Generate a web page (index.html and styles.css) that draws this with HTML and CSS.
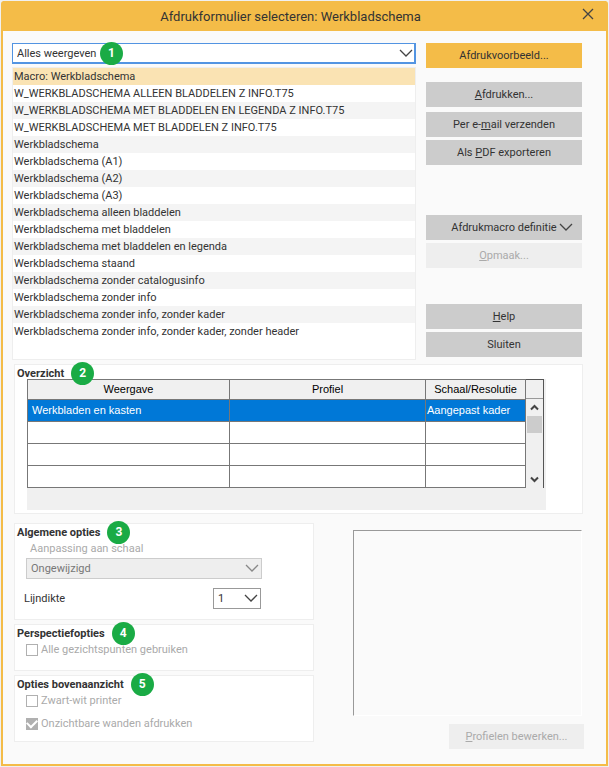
FILE: index.html
```html
<!DOCTYPE html>
<html lang="nl">
    <head>
        <meta charset="UTF-8" />
        <meta name="viewport" content="width=device-width, initial-scale=1.0" />
        <title>Afdrukformulier selecteren: Werkbladschema</title>
        <link rel="stylesheet" href="styles.css">
    </head>
    <body>
        <div class="window">
            <header class="titlebar">
                <h1>Afdrukformulier selecteren: Werkbladschema</h1>
                <button class="close-btn" aria-label="Sluit venster">
                    <svg width="12" height="12" viewBox="0 0 12 12"><path d="M1 1L11 11M11 1L1 11" /></svg>
                </button>
            </header>

            <main class="content">
                <section class="top">
                    <div class="forms">
                        <div class="combo combo-active">
                            <select aria-label="Weergave filter">
                                <option>Alles weergeven</option>
                            </select>
                            <svg class="chevron" width="14" height="8" viewBox="0 0 14 8"><path d="M1 1L7 7L13 1" /></svg>
                            <span class="badge">1</span>
                        </div>
                        <ul class="form-list" role="listbox" aria-label="Formulieren">
                            <li class="selected" role="option" aria-selected="true">Macro: Werkbladschema</li>
                            <li role="option">W_WERKBLADSCHEMA ALLEEN BLADDELEN Z INFO.T75</li>
                            <li role="option">W_WERKBLADSCHEMA MET BLADDELEN EN LEGENDA Z INFO.T75</li>
                            <li role="option">W_WERKBLADSCHEMA MET BLADDELEN Z INFO.T75</li>
                            <li role="option">Werkbladschema</li>
                            <li role="option">Werkbladschema (A1)</li>
                            <li role="option">Werkbladschema (A2)</li>
                            <li role="option">Werkbladschema (A3)</li>
                            <li role="option">Werkbladschema alleen bladdelen</li>
                            <li role="option">Werkbladschema met bladdelen</li>
                            <li role="option">Werkbladschema met bladdelen en legenda</li>
                            <li role="option">Werkbladschema staand</li>
                            <li role="option">Werkbladschema zonder catalogusinfo</li>
                            <li role="option">Werkbladschema zonder info</li>
                            <li role="option">Werkbladschema zonder info, zonder kader</li>
                            <li role="option">Werkbladschema zonder info, zonder kader, zonder header</li>
                        </ul>
                    </div>

                    <div class="actions">
                        <button class="btn btn-primary">Afdrukvoorbeeld...</button>
                        <div class="btn-group">
                            <button class="btn btn-print"><u>A</u>fdrukken...</button>
                            <button class="btn">Per e-<u>m</u>ail verzenden</button>
                            <button class="btn">Als <u>P</u>DF exporteren</button>
                        </div>
                        <div class="btn-group btn-group-macro">
                            <button class="btn btn-menu">
                                Afdrukmacro definitie
                                <svg class="menu-chevron" width="14" height="8" viewBox="0 0 14 8"><path d="M1 1L7 7L13 1" /></svg>
                            </button>
                            <button class="btn" disabled><u>O</u>pmaak...</button>
                        </div>
                        <div class="btn-group btn-group-end">
                            <button class="btn"><u>H</u>elp</button>
                            <button class="btn">Sluiten</button>
                        </div>
                    </div>
                </section>

                <section class="panel overview">
                    <h2>Overzicht <span class="badge">2</span></h2>
                    <div class="grid-area">
                        <div class="grid-row">
                            <table>
                                <colgroup>
                                    <col class="col-view">
                                    <col class="col-profile">
                                    <col class="col-scale">
                                </colgroup>
                                <thead>
                                    <tr><th>Weergave</th><th>Profiel</th><th>Schaal/Resolutie</th></tr>
                                </thead>
                                <tbody>
                                    <tr class="selected"><td>Werkbladen en kasten</td><td></td><td class="scale">Aangepast kader</td></tr>
                                    <tr><td></td><td></td><td></td></tr>
                                    <tr><td></td><td></td><td></td></tr>
                                    <tr><td></td><td></td><td></td></tr>
                                </tbody>
                            </table>
                            <div class="scrollbar">
                                <div class="scroll-head"></div>
                                <svg width="9" height="7" viewBox="0 0 9 7"><path d="M1 5.500L4.500 2L8 5.500" /></svg>
                                <div class="thumb"></div>
                                <svg class="scroll-down" width="9" height="7" viewBox="0 0 9 7"><path d="M1 1.500L4.500 5L8 1.500" /></svg>
                            </div>
                        </div>
                    </div>
                </section>

                <section class="bottom">
                    <div class="options">
                        <div class="panel general">
                            <h2>Algemene opties <span class="badge">3</span></h2>
                            <label class="scale-label" for="scale">Aanpassing aan schaal</label>
                            <div class="combo combo-disabled">
                                <select id="scale" disabled>
                                    <option>Ongewijzigd</option>
                                </select>
                                <svg class="chevron" width="14" height="8" viewBox="0 0 14 8"><path d="M1 1L7 7L13 1" /></svg>
                            </div>
                            <div class="line-row">
                                <label for="thickness">Lijndikte</label>
                                <div class="combo combo-small">
                                    <select id="thickness">
                                        <option>1</option>
                                    </select>
                                    <svg class="chevron" width="14" height="8" viewBox="0 0 14 8"><path d="M1 1L7 7L13 1" /></svg>
                                </div>
                            </div>
                        </div>

                        <div class="panel perspective">
                            <h2>Perspectiefopties <span class="badge">4</span></h2>
                            <label class="check"><input type="checkbox" disabled> Alle gezichtspunten gebruiken</label>
                        </div>

                        <div class="panel topview">
                            <h2>Opties bovenaanzicht <span class="badge">5</span></h2>
                            <label class="check"><input type="checkbox" disabled> Zwart-wit printer</label>
                            <label class="check"><input type="checkbox" checked disabled> Onzichtbare wanden afdrukken</label>
                        </div>
                    </div>

                    <div class="preview-side">
                        <div class="preview"></div>
                        <button class="btn btn-profiles" disabled><u>P</u>rofielen bewerken...</button>
                    </div>
                </section>
            </main>
        </div>
    </body>
</html>
```
FILE: styles.css
```css
* {
    box-sizing: border-box;
}
body {
    margin: 0;
    padding: 1px;
    background: #f0f0f0;
    color: #333;
    font-family: Roboto, "Liberation Sans", sans-serif;
    font-size: 11px;
    line-height: 17px;
}
button,
select {
    font: inherit;
    color: inherit;
}
svg {
    fill: none;
    stroke: #444;
    stroke-width: 1.3;
}
.window {
    display: flex;
    flex-direction: column;
    min-height: calc(100vh - 2px);
    border: 2px solid #f4bc48;
    border-top: 0;
    border-radius: 3px 3px 0 0;
    background: #fafafa;
}
.titlebar {
    position: relative;
    height: 30px;
    padding-right: 28px;
    background: #f4bc48;
    text-align: center;
}
h1 {
    margin: 0;
    font-size: 13px;
    font-weight: normal;
    line-height: 31px;
}
.close-btn {
    position: absolute;
    top: 7px;
    right: 12px;
    display: flex;
    padding: 0;
    border: none;
    background: none;
}
.content {
    padding: 12px 24px 15px 9px;
}

/* form list and buttons */
.top {
    display: grid;
    grid-template-columns: 1fr 156px;
    gap: 10px;
}
.combo {
    position: relative;
    height: 21px;
}
.combo select {
    display: block;
    width: 100%;
    height: 100%;
    padding: 0 4px;
    border: 1px solid #999;
    border-radius: 0;
    background: white;
    appearance: none;
    opacity: 1;
}
.combo-active select {
    border: 1px solid #5294e2;
    border-width: 1px 2px 2px 1px;
}
.combo-disabled select {
    border-color: #ccc;
    background: #eee;
    color: #777;
}
.chevron {
    position: absolute;
    top: 6px;
    right: 3px;
    pointer-events: none;
}
.combo-disabled .chevron {
    stroke: #888;
}
.badge {
    position: relative;
    z-index: 1;
    display: flex;
    flex: none;
    align-items: center;
    justify-content: center;
    width: 23px;
    height: 23px;
    border-radius: 50%;
    background: #1aab45;
    color: white;
    font-size: 12px;
    font-weight: bold;
}
.combo .badge {
    position: absolute;
    top: -1px;
    left: 88px;
}
.form-list {
    height: 293px;
    margin: 3px 0 0;
    padding: 0;
    border: 1px solid #eee;
    background: white;
    list-style: none;
}
.form-list li {
    height: 17px;
    padding-left: 1px;
}
.form-list li:nth-child(odd) {
    background: #f4f4f4;
}
.form-list li.selected {
    background: #fae3b3;
}
.btn {
    display: block;
    width: 100%;
    height: 25px;
    padding: 0;
    border: none;
    background: #ccc;
}
.btn:disabled {
    background: #eee;
    color: #aaa;
}
.btn-primary {
    background: #f4bc48;
}
.btn-group {
    display: flex;
    flex-direction: column;
    gap: 3px;
    margin-top: 14px;
}
.btn-print {
    margin-bottom: 2px;
}
.btn-group-macro {
    margin-top: 50px;
}
.btn-group-end {
    margin-top: 36px;
}
.btn-menu {
    position: relative;
}
.menu-chevron {
    position: absolute;
    top: 8px;
    right: 9px;
}

/* panels */
.panel {
    border: 1px solid #eee;
    background: white;
}
h2 {
    display: flex;
    align-items: center;
    gap: 7px;
    height: 16px;
    margin: 0;
    padding-left: 2px;
    font-size: 11px;
}
.overview {
    margin: 4px -1px 0 2px;
    padding-bottom: 3px;
}
.grid-area {
    margin: -2px 36px 0 12px;
    padding-bottom: 22px;
    padding-right: 2px;
    background: #f0f0f0;
}
.grid-row {
    display: flex;
    color: black;
    font-family: "Liberation Sans", Arial, sans-serif;
}
table {
    flex: 1;
    border-collapse: collapse;
    table-layout: fixed;
    border: 1px solid #555;
}
.col-view {
    width: 202px;
}
.col-scale {
    width: 100px;
}
th,
td {
    height: 22px;
    padding: 0 4px;
    border: 1px solid #777;
    background: white;
    text-align: left;
}
th {
    height: 20px;
    padding: 0;
    background: #f0f0f0;
    font-weight: normal;
    text-align: center;
}
tr.selected td {
    background: #0078d7;
    color: white;
}
td.scale {
    padding: 0 1px;
}
.scrollbar {
    display: flex;
    flex-direction: column;
    align-items: center;
    width: 18px;
    border-top: 1px solid #555;
    border-right: 1px solid #555;
}
.scrollbar svg {
    margin: 5px 0;
    stroke-width: 2;
}
.scroll-head {
    align-self: stretch;
    height: 19px;
    border-bottom: 1px solid #999;
}
.thumb {
    width: 15px;
    height: 17px;
    background: #ccc;
}
.scrollbar .scroll-down {
    margin-top: auto;
}

/* options and preview */
.bottom {
    display: grid;
    grid-template-columns: 300px 1fr;
    gap: 39px;
    margin: 9px 0 0 2px;
}
.options {
    display: flex;
    flex-direction: column;
    gap: 4px;
}
.general {
    height: 97px;
}
.scale-label {
    display: block;
    margin-left: 15px;
    color: #aaa;
}
.combo-disabled {
    margin: 1px 51px 9px 11px;
}
.line-row {
    display: flex;
    align-items: center;
    justify-content: space-between;
    margin: 0 52px 0 9px;
}
.combo-small {
    width: 48px;
}
.perspective {
    height: 47px;
}
.topview {
    height: 67px;
}
.check {
    display: flex;
    align-items: center;
    gap: 3px;
    margin-left: 11px;
    color: #aaa;
}
.check + .check {
    margin-top: 6px;
}
.check input {
    display: flex;
    align-items: center;
    justify-content: center;
    width: 12px;
    height: 12px;
    margin: 0;
    border: 1px solid #b0b0b0;
    background: white;
    appearance: none;
}
.check input:checked {
    background: #b0b0b0;
}
.check input:checked::after {
    content: "";
    width: 9px;
    height: 5px;
    margin-bottom: 3px;
    border: solid white;
    border-width: 0 0 2px 2px;
    transform: rotate(-45deg);
}
.preview-side {
    display: flex;
    flex-direction: column;
    padding-top: 7px;
}
.preview {
    height: 186px;
    border: 1px solid white;
    border-top-color: #999;
    border-left-color: #999;
}
.btn-profiles {
    align-self: flex-end;
    width: 135px;
    margin: 8px -2px 0 0;
}
```
